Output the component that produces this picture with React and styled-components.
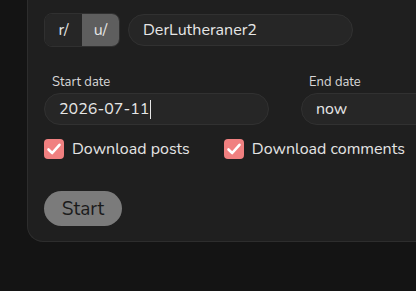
import React from "react";
import styled, { createGlobalStyle } from "styled-components";

const GlobalStyle = createGlobalStyle`
    html, body {
        margin: 0;
        padding: 0;
        background: #141414;
        overflow: hidden;
    }
    body {
        font-family: "Nunito", Lato, "Noto Sans", sans-serif;
        color: #e4e4e4;
    }
`;

const Page = styled.div`
    width: 416px;
    height: 291px;
    background: #141414;
    box-sizing: border-box;
    overflow: hidden;
`;

const Panel = styled.div`
    margin-left: 27px;
    width: 389px;
    box-sizing: border-box;
    padding: 13px 0 15px 16px;
    background: #1f1f1f;
    border: 1px solid #2d2d2d;
    border-top: none;
    border-right: none;
    border-bottom-left-radius: 16px;
    overflow: hidden;
`;

const Row = styled.div`
    display: flex;
    align-items: center;
    gap: ${(p) => p.gap || 8}px;
    margin-top: ${(p) => p.top || 0}px;
`;

const Segmented = styled.div`
    display: flex;
    height: 34px;
    border: 1px solid #303030;
    border-radius: 8px;
    overflow: hidden;
    box-sizing: border-box;
    flex-shrink: 0;
`;

const Segment = styled.button`
    width: 37px;
    border: none;
    padding: 0;
    font-family: inherit;
    font-size: 16px;
    color: #e4e4e4;
    background: ${(p) => (p.active ? "#5e5e5e" : "#262626")};
`;

const TextInput = styled.div`
    width: ${(p) => p.width}px;
    height: 32px;
    box-sizing: border-box;
    padding-left: 14px;
    display: flex;
    align-items: center;
    background: #262626;
    border: 1px solid #313131;
    border-radius: 16px;
    font-size: 16px;
    color: #e6e6e6;
    flex-shrink: 0;
`;

const Caret = styled.span`
    display: inline-block;
    width: 1px;
    height: 19px;
    margin-left: 1px;
    background: #e6e6e6;
`;

const DateGrid = styled.div`
    display: grid;
    grid-template-columns: 225px 225px;
    column-gap: 32px;
    margin-top: 27px;
`;

const Field = styled.div`
    display: flex;
    flex-direction: column;
`;

const Label = styled.label`
    font-size: 13px;
    color: #d8d8d8;
    padding-left: 8px;
    margin-bottom: 3px;
    line-height: 16px;
`;

const CheckLabel = styled.label`
    display: flex;
    align-items: center;
    gap: 8px;
    font-size: 16px;
    color: #e4e4e4;
    white-space: nowrap;
`;

const Box = styled.span`
    width: 20px;
    height: 20px;
    border-radius: 4px;
    background: #f08080;
    display: flex;
    align-items: center;
    justify-content: center;
`;

const StartButton = styled.button`
    margin-top: 31px;
    width: 78px;
    height: 35px;
    border: none;
    border-radius: 18px;
    background: #7b7b7b;
    color: #1a1a1a;
    font-family: inherit;
    font-size: 19px;
    padding: 0;
`;

const Check = ({ children }) => (
    <CheckLabel>
        <Box>
            <svg width="16" height="16" viewBox="0 0 16 16">
                <path d="M2.5 8.5 L6.2 12 L13.5 3.8" fill="none" stroke="#fff" strokeWidth="2.6" strokeLinecap="round" strokeLinejoin="round" />
            </svg>
        </Box>
        {children}
    </CheckLabel>
);

export default function App() {
    return (
        <Page>
            <GlobalStyle />
            <Panel>
                <Row>
                    <Segmented>
                        <Segment>r/</Segment>
                        <Segment active>u/</Segment>
                    </Segmented>
                    <TextInput width={225}>DerLutheraner2</TextInput>
                </Row>
                <DateGrid>
                    <Field>
                        <Label>Start date</Label>
                        <TextInput width={225}>
                            2026-07-11
                            <Caret />
                        </TextInput>
                    </Field>
                    <Field>
                        <Label>End date</Label>
                        <TextInput width={225}>now</TextInput>
                    </Field>
                </DateGrid>
                <Row gap={34} top={13}>
                    <Check>Download posts</Check>
                    <Check>Download comments</Check>
                </Row>
                <StartButton>Start</StartButton>
            </Panel>
        </Page>
    );
}
